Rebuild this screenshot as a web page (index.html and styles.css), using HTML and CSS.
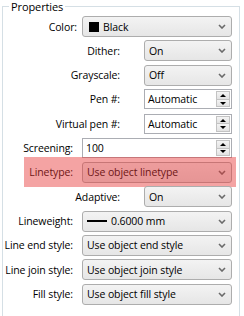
FILE: index.html
```html
<!DOCTYPE html>
<html>
<head>
    <title>Properties</title>
    <meta name="viewport" content="width=device-width, initial-scale=1">
    <link rel="stylesheet" href="styles.css">
</head>
<body>
    <fieldset class="props">
        <legend>Properties</legend>
        <div class="rows">
            <div class="row">
                <span class="lbl lbl-color">Color:</span>
                <div class="combo"><span class="swatch"></span>Black<svg class="arrow" width="8" height="5" viewBox="0 0 8 5"><path d="M1 1 L4 4 L7 1" fill="none" stroke="#6a6a6a" stroke-width="1.6"/></svg></div>
            </div>
            <div class="row short">
                <span class="lbl">Dither:</span>
                <div class="combo">On<svg class="arrow" width="8" height="5" viewBox="0 0 8 5"><path d="M1 1 L4 4 L7 1" fill="none" stroke="#6a6a6a" stroke-width="1.6"/></svg></div>
            </div>
            <div class="row short">
                <span class="lbl">Grayscale:</span>
                <div class="combo">Off<svg class="arrow" width="8" height="5" viewBox="0 0 8 5"><path d="M1 1 L4 4 L7 1" fill="none" stroke="#6a6a6a" stroke-width="1.6"/></svg></div>
            </div>
            <div class="row short">
                <span class="lbl">Pen #:</span>
                <div class="spin">Automatic<div class="btns"><span><i class="up"></i></span><span><i class="down"></i></span></div></div>
            </div>
            <div class="row short">
                <span class="lbl">Virtual pen #:</span>
                <div class="spin">Automatic<div class="btns"><span><i class="up"></i></span><span><i class="down"></i></span></div></div>
            </div>
            <div class="row">
                <span class="lbl">Screening:</span>
                <div class="spin">100<div class="btns"><span><i class="up"></i></span><span><i class="down"></i></span></div></div>
            </div>
            <div class="row hl">
                <span class="lbl">Linetype:</span>
                <div class="combo">Use object linetype<svg class="arrow" width="8" height="5" viewBox="0 0 8 5"><path d="M1 1 L4 4 L7 1" fill="none" stroke="#6a6a6a" stroke-width="1.6"/></svg></div>
            </div>
            <div class="row short">
                <span class="lbl">Adaptive:</span>
                <div class="combo">On<svg class="arrow" width="8" height="5" viewBox="0 0 8 5"><path d="M1 1 L4 4 L7 1" fill="none" stroke="#6a6a6a" stroke-width="1.6"/></svg></div>
            </div>
            <div class="row">
                <span class="lbl">Lineweight:</span>
                <div class="combo"><span class="weight"></span>0.6000 mm<svg class="arrow" width="8" height="5" viewBox="0 0 8 5"><path d="M1 1 L4 4 L7 1" fill="none" stroke="#6a6a6a" stroke-width="1.6"/></svg></div>
            </div>
            <div class="row">
                <span class="lbl">Line end style:</span>
                <div class="combo">Use object end style<svg class="arrow" width="8" height="5" viewBox="0 0 8 5"><path d="M1 1 L4 4 L7 1" fill="none" stroke="#6a6a6a" stroke-width="1.6"/></svg></div>
            </div>
            <div class="row">
                <span class="lbl">Line join style:</span>
                <div class="combo">Use object join style<svg class="arrow" width="8" height="5" viewBox="0 0 8 5"><path d="M1 1 L4 4 L7 1" fill="none" stroke="#6a6a6a" stroke-width="1.6"/></svg></div>
            </div>
            <div class="row">
                <span class="lbl">Fill style:</span>
                <div class="combo">Use object fill style<svg class="arrow" width="8" height="5" viewBox="0 0 8 5"><path d="M1 1 L4 4 L7 1" fill="none" stroke="#6a6a6a" stroke-width="1.6"/></svg></div>
            </div>
        </div>
    </fieldset>
</body>
</html>
```

FILE: styles.css
```css
body {
    margin: 0;
    height: 316px;
    overflow: hidden;
    background-color: white;
    font-family: "Open Sans", "Noto Sans", sans-serif;
    font-size: 10.5px;
    letter-spacing: -0.1px;
    color: #000;
}
.props {
    margin: 0 4px 0 2px;
    padding: 3px 7px 0 0;
    height: 316px;
    box-sizing: border-box;
    border: 1px solid #d5dfe5;
    border-bottom: none;
}
.props legend {
    margin-left: 6px;
    padding: 0 2px;
    font-size: 11px;
    line-height: 13px;
}
.rows {
    display: grid;
    grid-auto-rows: 21px;
    row-gap: 3.33px;
}
.row {
    display: flex;
    align-items: center;
    justify-content: flex-end;
    position: relative;
}
.lbl {
    margin-right: 9px;
    white-space: nowrap;
}
.lbl-color {
    margin-right: 5px;
}
.short .lbl {
    margin-right: 24px;
}
.combo {
    width: 150px;
    height: 21px;
    box-sizing: border-box;
    display: flex;
    align-items: center;
    padding-left: 4px;
    border: 1px solid #adadad;
    border-radius: 3px;
    background: linear-gradient(#f3f3f3, #e6e6e6);
    white-space: nowrap;
}
.spin {
    width: 150px;
    height: 20px;
    box-sizing: border-box;
    display: flex;
    align-items: center;
    padding-left: 3px;
    border: 1px solid #abadb3;
    background-color: white;
}
.short .combo,
.short .spin {
    width: 88px;
}
.arrow {
    margin-left: auto;
    margin-right: 5px;
}
.swatch {
    width: 10px;
    height: 10px;
    margin: 0 4px 0 2px;
    background-color: #000;
}
.weight {
    width: 20px;
    height: 2px;
    margin-right: 4px;
    background-color: #000;
}
.btns {
    margin-left: auto;
    margin-right: 1px;
    width: 14px;
    height: 16px;
    display: flex;
    flex-direction: column;
}
.btns span {
    flex: 1;
    display: flex;
    align-items: center;
    justify-content: center;
    border: 1px solid #c3c3c3;
    background: linear-gradient(#f4f4f4, #e2e2e2);
}
.btns span + span {
    border-top: none;
}
.up {
    border-left: 3px solid transparent;
    border-right: 3px solid transparent;
    border-bottom: 3px solid #000;
}
.down {
    border-left: 3px solid transparent;
    border-right: 3px solid transparent;
    border-top: 3px solid #000;
}
.hl::after {
    content: "";
    position: absolute;
    left: 21px;
    right: -4px;
    top: -5px;
    bottom: -4px;
    background-color: rgba(230, 50, 50, 0.45);
}
```
